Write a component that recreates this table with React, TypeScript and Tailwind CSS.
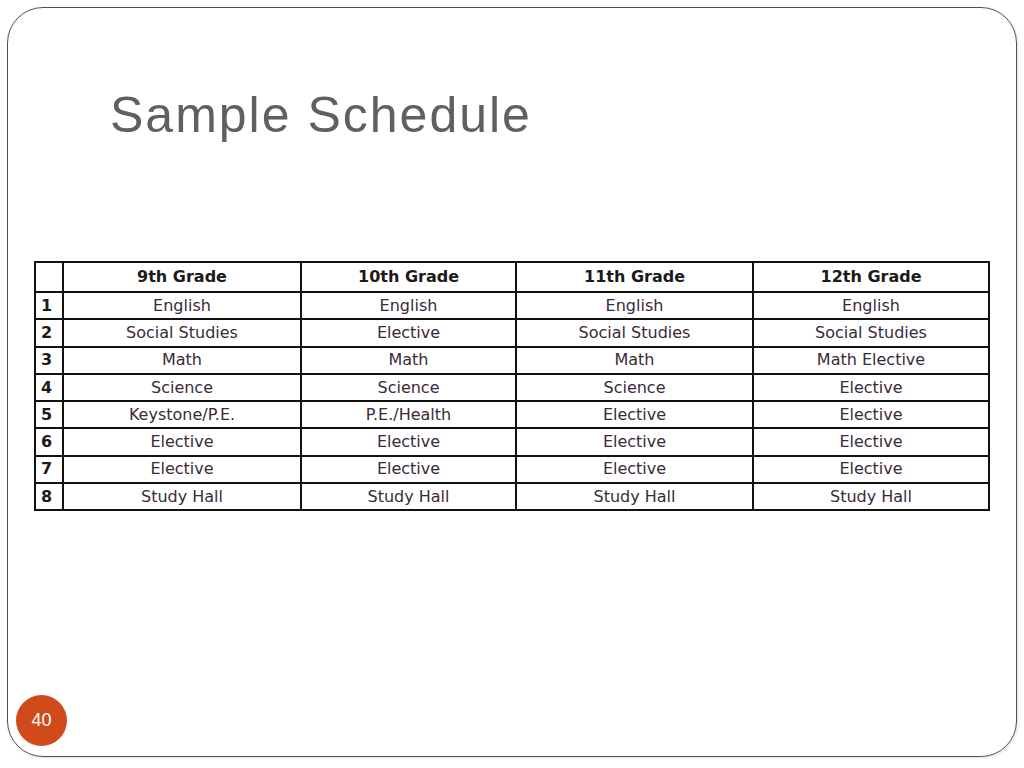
import React from "react";

const rows: string[][] = [
  ["English", "English", "English", "English"],
  ["Social Studies", "Elective", "Social Studies", "Social Studies"],
  ["Math", "Math", "Math", "Math Elective"],
  ["Science", "Science", "Science", "Elective"],
  ["Keystone/P.E.", "P.E./Health", "Elective", "Elective"],
  ["Elective", "Elective", "Elective", "Elective"],
  ["Elective", "Elective", "Elective", "Elective"],
  ["Study Hall", "Study Hall", "Study Hall", "Study Hall"],
];

const headers = ["9th Grade", "10th Grade", "11th Grade", "12th Grade"];

export default function App() {
  return (
    <div className="w-[1024px] h-[768px] bg-white pt-[7px] pl-[7px] pr-[7px] pb-[11px]">
      <div className="w-full h-full border border-[#505050] rounded-[36px] flex flex-col shadow-[1px_1px_3px_rgba(0,0,0,0.12)]">
        <div
          className="pt-[82px] pl-[102px] text-[50px] leading-[50px] tracking-[2px] text-[#635e60]"
          style={{ fontFamily: '"Liberation Sans", Arial, sans-serif' }}
        >
          Sample Schedule
        </div>
        <div
          className="mt-[121px] ml-[26px] w-[956px] bg-[#111] p-[2px] grid grid-cols-[26px_236px_213px_235px_234px] gap-[2px] text-[16px]"
          style={{ fontFamily: '"DejaVu Sans", Verdana, sans-serif' }}
        >
          <div className="bg-white h-[28px]" />
          {headers.map((h) => (
            <div
              key={h}
              className="bg-white h-[28px] flex items-center justify-center font-bold text-[#1c1a1a]"
            >
              {h}
            </div>
          ))}
          {rows.map((r, i) => (
            <React.Fragment key={i}>
              <div className="bg-white h-[25.3px] flex items-center pl-[5px] font-bold text-[#1c1a1a]">
                {i + 1}
              </div>
              {r.map((c, j) => (
                <div
                  key={j}
                  className="bg-white h-[25.3px] flex items-center justify-center text-[#3a2a3a]"
                >
                  {c}
                </div>
              ))}
            </React.Fragment>
          ))}
        </div>
        <div className="mt-auto mb-[10px] ml-[8px] w-[51px] h-[51px] rounded-full bg-[#d04a1c] flex items-center justify-center">
          <span
            className="text-white text-[18px]"
            style={{ fontFamily: '"Liberation Sans", Arial, sans-serif' }}
          >
            40
          </span>
        </div>
      </div>
    </div>
  );
}
